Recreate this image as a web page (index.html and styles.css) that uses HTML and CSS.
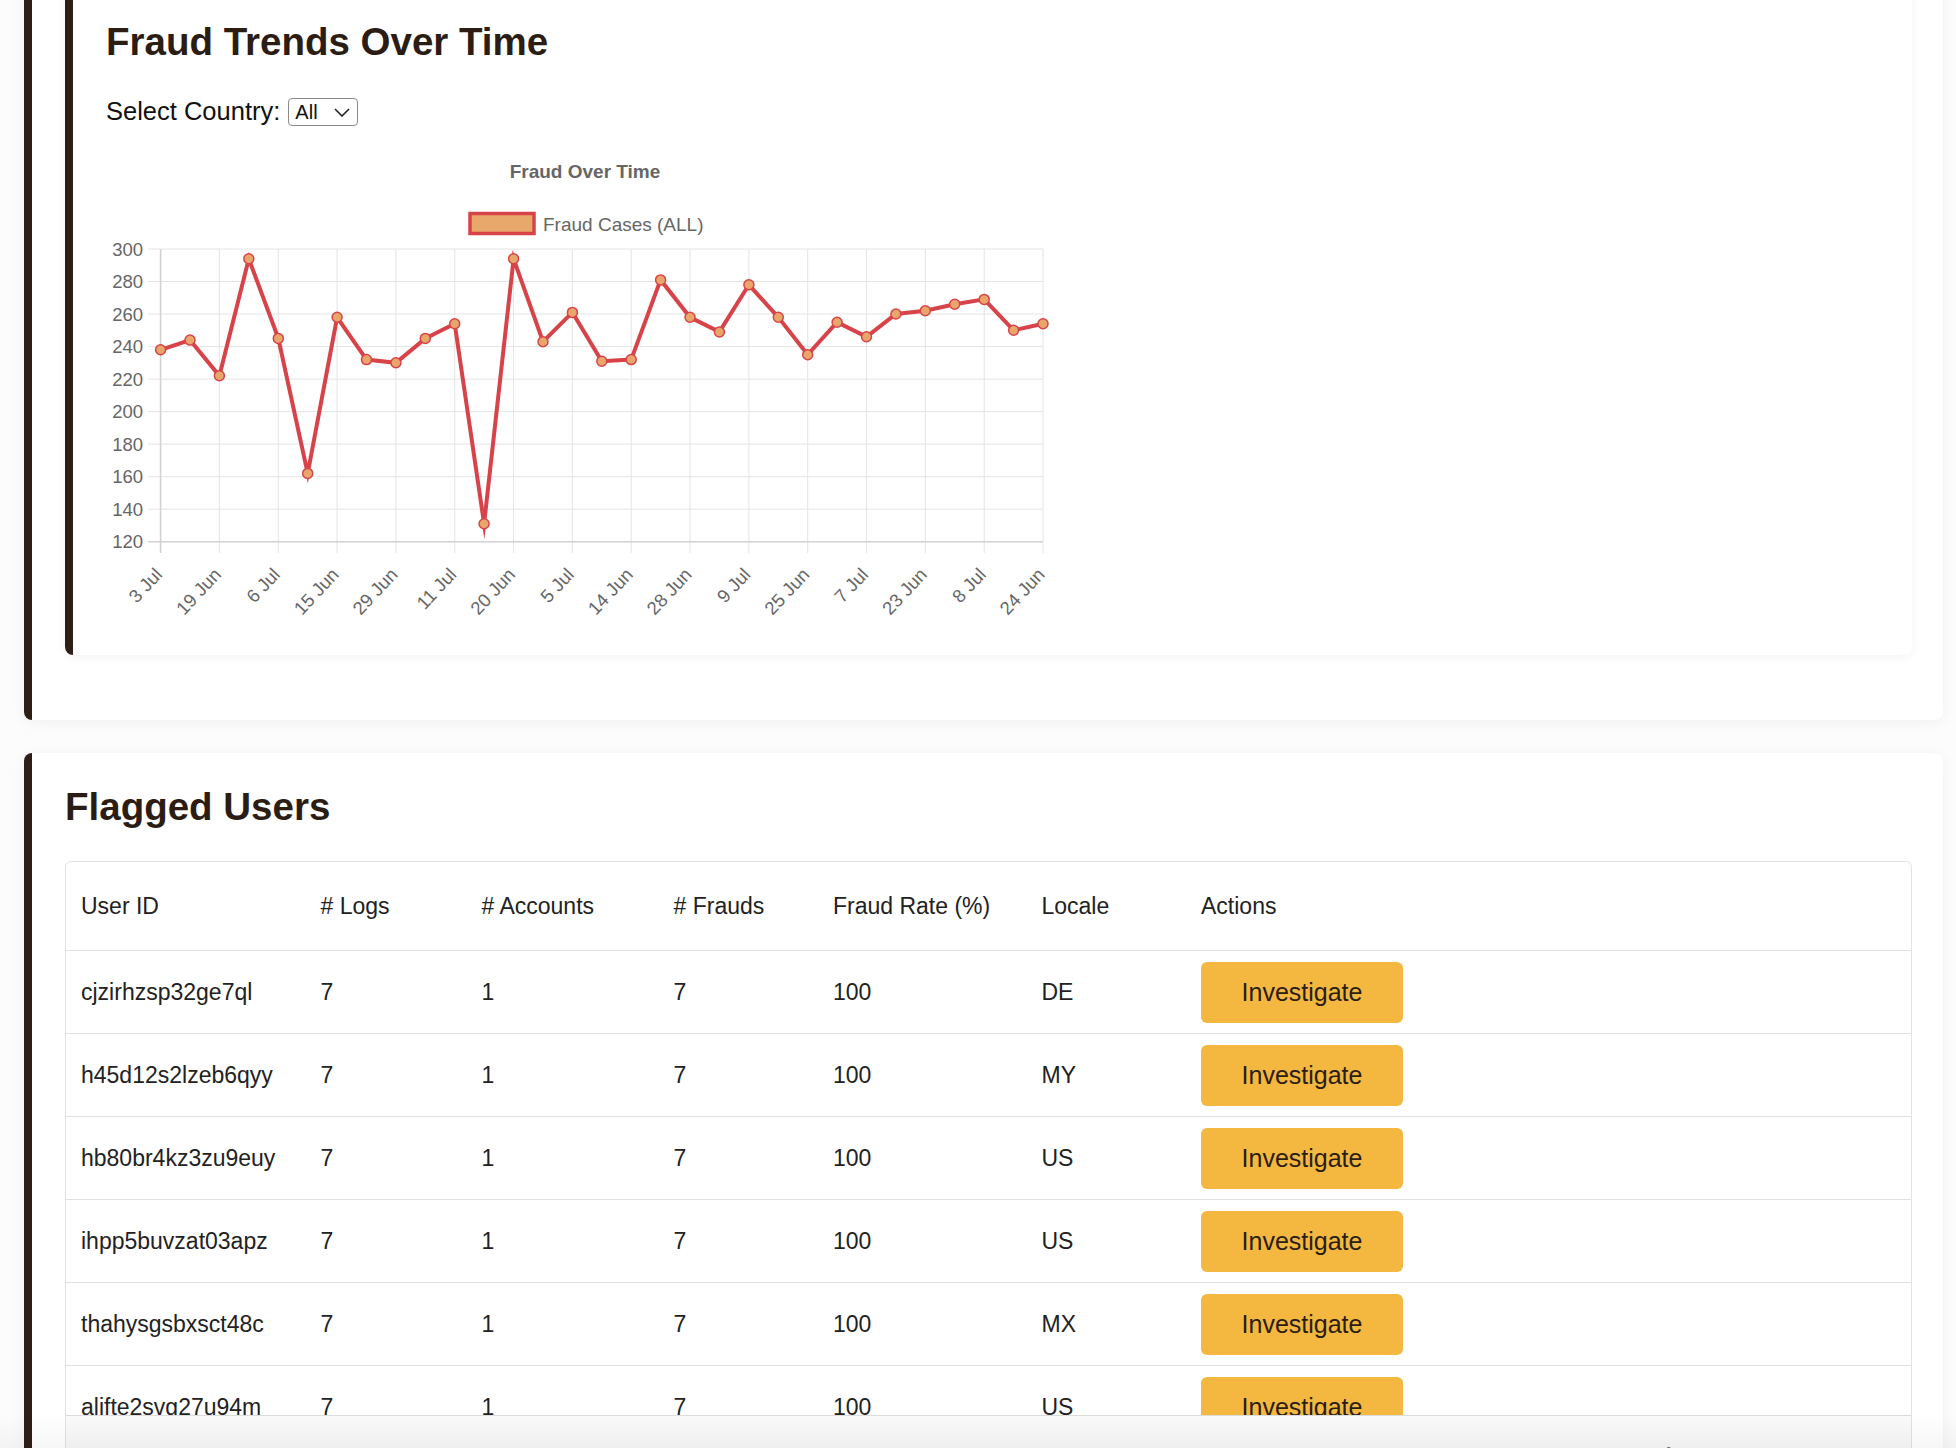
FILE: index.html
```html
<!DOCTYPE html>
<html lang="en">
<head>
<meta charset="utf-8">
<title>Fraud Dashboard</title>
<link rel="stylesheet" href="styles.css">
</head>
<body>
<div class="page">
  <section class="panel panel-trends">
    <div class="subpanel">
      <h2 class="title">Fraud Trends Over Time</h2>
      <div class="filter">
        <label class="filter-label" for="country">Select Country:</label>
        <div class="select-wrap">
          <select id="country" class="select"><option>All</option></select>
          <svg class="chev" width="16" height="9" viewBox="0 0 16 9"><path d="M1 1 L8 8 L15 1" fill="none" stroke="#222" stroke-width="1.6"/></svg>
        </div>
      </div>
      <svg class="chart" width="956" height="485" viewBox="0 0 956 485">
        <text class="c-title" x="478" y="26">Fraud Over Time</text>
        <rect x="363" y="68.5" width="64" height="20" fill="#e8a76b" stroke="#d8434a" stroke-width="3.5"/>
        <text class="c-legend" x="436" y="79">Fraud Cases (ALL)</text>
        <g class="grid">
          <line x1="41" y1="104" x2="936" y2="104"/>
          <line x1="41" y1="136.5" x2="936" y2="136.5"/>
          <line x1="41" y1="169" x2="936" y2="169"/>
          <line x1="41" y1="201.6" x2="936" y2="201.6"/>
          <line x1="41" y1="234.1" x2="936" y2="234.1"/>
          <line x1="41" y1="266.6" x2="936" y2="266.6"/>
          <line x1="41" y1="299.1" x2="936" y2="299.1"/>
          <line x1="41" y1="331.7" x2="936" y2="331.7"/>
          <line x1="41" y1="364.2" x2="936" y2="364.2"/>
          <line x1="112.4" y1="104" x2="112.4" y2="408"/>
          <line x1="171.3" y1="104" x2="171.3" y2="408"/>
          <line x1="230.1" y1="104" x2="230.1" y2="408"/>
          <line x1="288.9" y1="104" x2="288.9" y2="408"/>
          <line x1="347.7" y1="104" x2="347.7" y2="408"/>
          <line x1="406.6" y1="104" x2="406.6" y2="408"/>
          <line x1="465.4" y1="104" x2="465.4" y2="408"/>
          <line x1="524.2" y1="104" x2="524.2" y2="408"/>
          <line x1="583" y1="104" x2="583" y2="408"/>
          <line x1="641.9" y1="104" x2="641.9" y2="408"/>
          <line x1="700.7" y1="104" x2="700.7" y2="408"/>
          <line x1="759.5" y1="104" x2="759.5" y2="408"/>
          <line x1="818.3" y1="104" x2="818.3" y2="408"/>
          <line x1="877.2" y1="104" x2="877.2" y2="408"/>
          <line x1="936" y1="104" x2="936" y2="408"/>
        </g>
        <g class="axis">
          <line x1="41" y1="396.7" x2="936" y2="396.7"/>
          <line x1="53.6" y1="104" x2="53.6" y2="408"/>
        </g>
        <g class="ylabels">
          <text x="36" y="104">300</text>
          <text x="36" y="136.5">280</text>
          <text x="36" y="169">260</text>
          <text x="36" y="201.6">240</text>
          <text x="36" y="234.1">220</text>
          <text x="36" y="266.6">200</text>
          <text x="36" y="299.1">180</text>
          <text x="36" y="331.7">160</text>
          <text x="36" y="364.2">140</text>
          <text x="36" y="396.7">120</text>
        </g>
        <g class="xlabels">
          <text transform="translate(51.6 426) rotate(-47)">3 Jul</text>
          <text transform="translate(110.4 426) rotate(-47)">19 Jun</text>
          <text transform="translate(169.3 426) rotate(-47)">6 Jul</text>
          <text transform="translate(228.1 426) rotate(-47)">15 Jun</text>
          <text transform="translate(286.9 426) rotate(-47)">29 Jun</text>
          <text transform="translate(345.7 426) rotate(-47)">11 Jul</text>
          <text transform="translate(404.6 426) rotate(-47)">20 Jun</text>
          <text transform="translate(463.4 426) rotate(-47)">5 Jul</text>
          <text transform="translate(522.2 426) rotate(-47)">14 Jun</text>
          <text transform="translate(581 426) rotate(-47)">28 Jun</text>
          <text transform="translate(639.9 426) rotate(-47)">9 Jul</text>
          <text transform="translate(698.7 426) rotate(-47)">25 Jun</text>
          <text transform="translate(757.5 426) rotate(-47)">7 Jul</text>
          <text transform="translate(816.3 426) rotate(-47)">23 Jun</text>
          <text transform="translate(875.2 426) rotate(-47)">8 Jul</text>
          <text transform="translate(934 426) rotate(-47)">24 Jun</text>
        </g>
        <polyline class="series" points="53.6,204.8 83,195.1 112.4,230.8 141.8,113.8 171.3,193.4 200.7,328.4 230.1,172.3 259.5,214.6 288.9,217.8 318.3,193.4 347.7,178.8 377.1,378.8 406.6,113.8 436,196.7 465.4,167.4 494.8,216.2 524.2,214.6 553.6,134.9 583,172.3 612.4,186.9 641.9,139.8 671.3,172.3 700.7,209.7 730.1,177.2 759.5,191.8 788.9,169 818.3,165.8 847.7,159.3 877.2,154.4 906.6,185.3 936,178.8"/>
        <g class="pts">
          <circle cx="53.6" cy="204.8" r="5"/><circle cx="83" cy="195.1" r="5"/><circle cx="112.4" cy="230.8" r="5"/>
          <circle cx="141.8" cy="113.8" r="5"/><circle cx="171.3" cy="193.4" r="5"/><circle cx="200.7" cy="328.4" r="5"/>
          <circle cx="230.1" cy="172.3" r="5"/><circle cx="259.5" cy="214.6" r="5"/><circle cx="288.9" cy="217.8" r="5"/>
          <circle cx="318.3" cy="193.4" r="5"/><circle cx="347.7" cy="178.8" r="5"/><circle cx="377.1" cy="378.8" r="5"/>
          <circle cx="406.6" cy="113.8" r="5"/><circle cx="436" cy="196.7" r="5"/><circle cx="465.4" cy="167.4" r="5"/>
          <circle cx="494.8" cy="216.2" r="5"/><circle cx="524.2" cy="214.6" r="5"/><circle cx="553.6" cy="134.9" r="5"/>
          <circle cx="583" cy="172.3" r="5"/><circle cx="612.4" cy="186.9" r="5"/><circle cx="641.9" cy="139.8" r="5"/>
          <circle cx="671.3" cy="172.3" r="5"/><circle cx="700.7" cy="209.7" r="5"/><circle cx="730.1" cy="177.2" r="5"/>
          <circle cx="759.5" cy="191.8" r="5"/><circle cx="788.9" cy="169" r="5"/><circle cx="818.3" cy="165.8" r="5"/>
          <circle cx="847.7" cy="159.3" r="5"/><circle cx="877.2" cy="154.4" r="5"/><circle cx="906.6" cy="185.3" r="5"/>
          <circle cx="936" cy="178.8" r="5"/>
        </g>
      </svg>
    </div>
  </section>

  <section class="panel panel-users">
    <h2 class="title">Flagged Users</h2>
    <div class="table-box">
      <div class="table-scroll">
        <div class="row head" role="row">
          <div class="cell">User ID</div><div class="cell"># Logs</div><div class="cell"># Accounts</div><div class="cell"># Frauds</div><div class="cell">Fraud Rate (%)</div><div class="cell">Locale</div><div class="cell">Actions</div>
        </div>
        <div class="row" role="row">
          <div class="cell">cjzirhzsp32ge7ql</div><div class="cell">7</div><div class="cell">1</div><div class="cell">7</div><div class="cell">100</div><div class="cell">DE</div><div class="cell"><button class="btn">Investigate</button></div>
        </div>
        <div class="row" role="row">
          <div class="cell">h45d12s2lzeb6qyy</div><div class="cell">7</div><div class="cell">1</div><div class="cell">7</div><div class="cell">100</div><div class="cell">MY</div><div class="cell"><button class="btn">Investigate</button></div>
        </div>
        <div class="row" role="row">
          <div class="cell">hb80br4kz3zu9euy</div><div class="cell">7</div><div class="cell">1</div><div class="cell">7</div><div class="cell">100</div><div class="cell">US</div><div class="cell"><button class="btn">Investigate</button></div>
        </div>
        <div class="row" role="row">
          <div class="cell">ihpp5buvzat03apz</div><div class="cell">7</div><div class="cell">1</div><div class="cell">7</div><div class="cell">100</div><div class="cell">US</div><div class="cell"><button class="btn">Investigate</button></div>
        </div>
        <div class="row" role="row">
          <div class="cell">thahysgsbxsct48c</div><div class="cell">7</div><div class="cell">1</div><div class="cell">7</div><div class="cell">100</div><div class="cell">MX</div><div class="cell"><button class="btn">Investigate</button></div>
        </div>
        <div class="row" role="row">
          <div class="cell">alifte2svg27u94m</div><div class="cell">7</div><div class="cell">1</div><div class="cell">7</div><div class="cell">100</div><div class="cell">US</div><div class="cell"><button class="btn">Investigate</button></div>
        </div>
      </div>
      <div class="table-footer">
        <span class="f1">Rows per page:</span>
        <span class="f2">10</span>
        <span class="f3">1–10 of 120</span>
        <span class="f4">‹</span>
        <span class="f5">›</span>
      </div>
    </div>
  </section>
</div>
<div class="bottom-fade"></div>
</body>
</html>
```

FILE: styles.css
```css
* { box-sizing: border-box; }
html, body { margin: 0; padding: 0; }
body {
  background: #fcfcfc;
  font-family: "Liberation Sans", Arial, Helvetica, sans-serif;
  color: #2b1d14;
  overflow: hidden;
}
.page {
  padding: 0 13px 0 24px;
  margin-top: -47px;
  display: flex;
  flex-direction: column;
  gap: 33px;
}
.panel {
  background: #fff;
  border-left: 8px solid #2e1f16;
  border-radius: 8px;
  box-shadow: 0 2px 14px rgba(0, 0, 0, 0.05);
  padding: 32px 31px 33px 33px;
}
.panel-users { padding-top: 31px; padding-bottom: 0; }
.subpanel {
  background: #fff;
  border-left: 8px solid #2e1f16;
  border-radius: 8px;
  box-shadow: 0 2px 12px rgba(0, 0, 0, 0.05);
  padding: 34px 34px 25px 33px;
  margin-bottom: 32px;
}
.title {
  margin: 0;
  font-size: 38.5px;
  line-height: 46px;
  font-weight: 700;
  color: #2b1d14;
}
.filter {
  margin-top: 32px;
  display: flex;
  align-items: center;
  height: 29px;
}
.filter-label { font-size: 25.5px; line-height: 29px; color: #111; }
.select-wrap { position: relative; margin-left: 8px; }
.select {
  appearance: none;
  -webkit-appearance: none;
  display: block;
  width: 70px;
  height: 28px;
  border: 1px solid #8a8a8a;
  border-radius: 4px;
  background: #fff;
  font-family: "Liberation Sans", Arial, sans-serif;
  font-size: 20px;
  color: #111;
  padding: 0 0 0 6px;
  margin: 0;
}
.chev { position: absolute; right: 8px; top: 10px; pointer-events: none; }
.chart { display: block; margin-top: 19px; margin-left: 1px; overflow: visible; }
.c-title {
  font: 700 19px "Liberation Sans", Arial, sans-serif;
  fill: #666;
  text-anchor: middle;
  dominant-baseline: central;
}
.c-legend {
  font: 19px "Liberation Sans", Arial, sans-serif;
  fill: #666;
  dominant-baseline: central;
}
.grid line { stroke: #e4e4e4; stroke-width: 1; }
.axis line { stroke: #d2d2d2; stroke-width: 1.6; }
.ylabels text {
  font: 18.5px "Liberation Sans", Arial, sans-serif;
  fill: #666;
  text-anchor: end;
  dominant-baseline: central;
}
.xlabels text {
  font: 18.5px "Liberation Sans", Arial, sans-serif;
  fill: #666;
  text-anchor: end;
  dominant-baseline: central;
}
.series {
  fill: none;
  stroke: #d8434a;
  stroke-width: 4;
  stroke-linejoin: miter;
  stroke-miterlimit: 10;
}
.pts circle { fill: #e9a66b; stroke: #d8434a; stroke-width: 1.5; }

.panel-users .title { margin-bottom: 31px; }
.table-box {
  border: 1px solid #e2e2e2;
  border-radius: 6px 6px 0 0;
  height: 700px;
  overflow: hidden;
  background: #fff;
}
.table-scroll { height: 553px; overflow: hidden; }
.row {
  display: grid;
  grid-template-columns: 239.5px 161px 192px 159.5px 208.5px 159.5px 1fr;
  height: 83px;
  border-bottom: 1px solid #e0e0e0;
  align-items: center;
  font-size: 23px;
  color: #222;
}
.row.head { height: 89px; }
.cell { padding: 0 15px; white-space: nowrap; }
.btn {
  display: block;
  width: 202px;
  height: 61px;
  border: none;
  border-radius: 6px;
  background: #f4b840;
  color: #2b1d14;
  font-family: "Liberation Sans", Arial, sans-serif;
  font-size: 25px;
  padding: 0;
}
.table-footer {
  border-top: 1px solid #dcdcdc;
  background: linear-gradient(#fafafa, #f0f0f0);
  height: 146px;
  display: flex;
  align-items: flex-start;
  padding-top: 28px;
  font-size: 20px;
  color: #666;
}
.f1 { margin-left: 1215px; }
.f2 { margin-left: 40px; }
.f3 { margin-left: 120px; }
.f4 { margin-left: 70px; }
.f5 { margin-left: 40px; }
.bottom-fade {
  position: fixed;
  left: 0;
  right: 0;
  bottom: 0;
  height: 34px;
  background: linear-gradient(rgba(0, 0, 0, 0), rgba(0, 0, 0, 0.035));
  pointer-events: none;
}
```
